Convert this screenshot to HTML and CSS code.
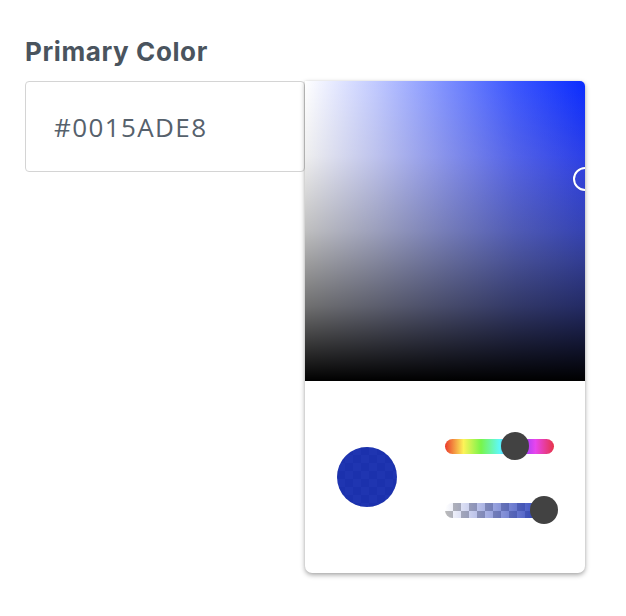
FILE: index.html
```html
<!DOCTYPE html>
<html lang="en">
<head>
  <meta charset="UTF-8" />
  <meta name="viewport" content="width=device-width, initial-scale=1.0"/>
  <title>Primary Color</title>
  <link rel="stylesheet" href="styles.css">
</head>
<body>
  <div class="field">
    <label class="field-label">Primary Color</label>
    <div class="picker-row">
      <input class="color-input" type="text" value="#0015ADE8">

      <!-- popover picker -->
      <div class="picker">
        <div class="saturation">
          <div class="sat-white"></div>
          <div class="sat-black"></div>
          <div class="sat-handle"></div>
        </div>
        <div class="controls">
          <div class="swatch"><div class="swatch-fill"></div></div>
          <div class="sliders">
            <div class="slider hue">
              <div class="thumb" style="left: 64.4%"></div>
            </div>
            <div class="slider alpha">
              <div class="alpha-fill"></div>
              <div class="thumb" style="left: 91%"></div>
            </div>
          </div>
        </div>
      </div>
    </div>
  </div>
</body>
</html>
```

FILE: styles.css
```css
body {
  margin: 0;
  padding: 35px 25px 40px;
  background: #fff;
  font-family: Inter, "Liberation Sans", sans-serif;
}

.field-label {
  display: block;
  font-size: 26px;
  line-height: 34px;
  font-weight: 700;
  letter-spacing: 0.6px;
  color: #4a545e;
  margin-bottom: 12px;
}

.picker-row {
  display: flex;
  align-items: flex-start;
}

.color-input {
  box-sizing: border-box;
  width: 280px;
  height: 91px;
  padding: 0 28px;
  border: 1px solid #d4d4d4;
  border-radius: 4px;
  font-family: "Open Sans", Inter, sans-serif;
  font-size: 26px;
  letter-spacing: 1.4px;
  color: #56616c;
  outline: none;
}

.picker {
  position: relative;
  width: 280px;
  flex: none;
  background: #fff;
  border-radius: 0 5px 7px 7px;
  box-shadow: 0 2px 5px rgba(0,0,0,0.35), 0 0 2px rgba(0,0,0,0.08);
  overflow: hidden;
}

.saturation {
  position: relative;
  height: 300px;
  background: linear-gradient(to bottom, #0a2cff 0%, #3548f4 30%, #4e60ea 60%, #5262e0 100%);
  overflow: hidden;
}

.sat-white, .sat-black {
  position: absolute;
  top: 0; left: 0;
  width: 100%; height: 100%;
}
.sat-white {
  background: linear-gradient(to right, #fff 0%, rgba(255,255,255,0.75) 25%, rgba(255,255,255,0.47) 50%, rgba(255,255,255,0.2) 75%, rgba(255,255,255,0) 100%);
}
/* darkening eased so the middle stays light */
.sat-black {
  background: linear-gradient(to bottom, rgba(0,0,0,0) 0%, rgba(0,0,0,0.0625) 25%, rgba(0,0,0,0.25) 50%, rgba(0,0,0,0.5625) 75%, #000 100%);
}

.sat-handle {
  position: absolute;
  left: 100%;
  top: 96px;
  width: 20px;
  height: 20px;
  margin: -10px 0 0 -12px;
  border: 2px solid #fff;
  border-radius: 50%;
  box-shadow: 0 0 1px rgba(0,0,0,0.4);
}

.controls {
  display: flex;
  align-items: center;
  height: 192px;
  padding: 0 0 0 32px;
  gap: 48px;
}

.swatch {
  width: 60px;
  height: 60px;
  border-radius: 50%;
  overflow: hidden;
  background-color: #fff;
  background-image:
    linear-gradient(45deg, #ccc 25%, transparent 25%, transparent 75%, #ccc 75%),
    linear-gradient(45deg, #ccc 25%, transparent 25%, transparent 75%, #ccc 75%);
  background-size: 16px 16px;
  background-position: 0 0, 8px 8px;
}
.swatch-fill {
  width: 100%;
  height: 100%;
  background: rgba(12, 36, 170, 0.92);
}

.sliders {
  display: flex;
  flex-direction: column;
  gap: 49px;
  width: 109px;
  margin-top: 2px;
}

.slider {
  position: relative;
  height: 15px;
  border-radius: 8px;
}

.hue {
  background: linear-gradient(to right, #ea3a2c 0%, #fdf358 17%, #78f54a 33%, #5ff8f8 50%, #3b45f3 67%, #b040f5 75%, #e845ee 83%, #e63448 100%);
}

.alpha {
  background-color: #fff;
  background-image:
    linear-gradient(45deg, #bbb 25%, transparent 25%, transparent 75%, #bbb 75%),
    linear-gradient(45deg, #bbb 25%, transparent 25%, transparent 75%, #bbb 75%);
  background-size: 16px 16px;
  background-position: 0 0, 8px 8px;
}
.alpha-fill {
  height: 100%;
  border-radius: 8px;
  background: linear-gradient(to right, rgba(24,48,180,0), #1830b4);
}

.thumb {
  position: absolute;
  top: 50%;
  width: 28px;
  height: 28px;
  margin: -14px 0 0 -14px;
  border-radius: 50%;
  background: #424242;
}
```
